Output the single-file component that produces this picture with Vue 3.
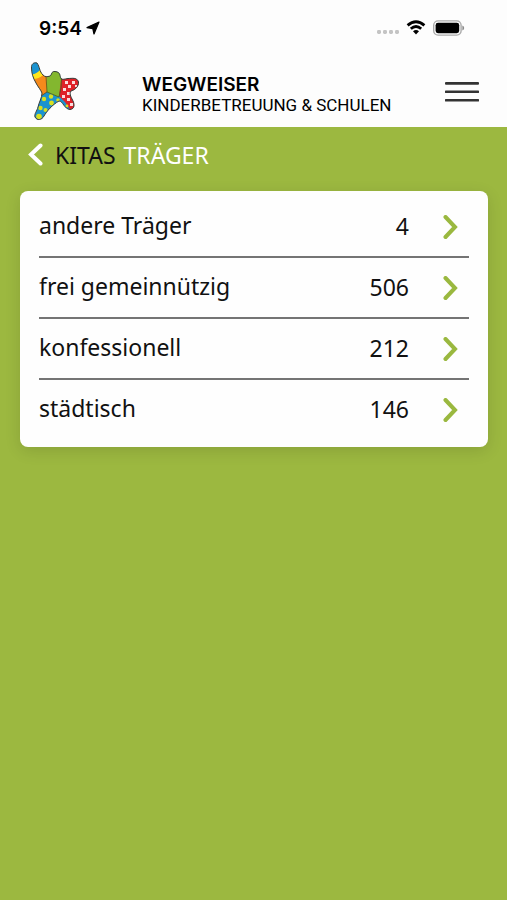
<template>
  <div class="app">
    <header class="header">
      <div class="status-bar">
        <div class="status-time">
          <span>9:54</span>
          <svg width="14" height="14" viewBox="0 0 14 14" aria-hidden="true">
            <path d="M13 1 L8 13 L6.8 7.7 L1 6.6 Z" fill="#000" stroke="#000" stroke-width="1.2" stroke-linejoin="round" />
          </svg>
        </div>
        <div class="status-icons">
          <svg width="22" height="20" viewBox="0 0 22 20" aria-hidden="true">
            <g fill="#c4c4c4">
              <rect v-for="n in 4" :key="n" :x="(n - 1) * 6" y="12" width="4" height="4" rx="1.4" />
            </g>
          </svg>
          <svg width="20" height="16" viewBox="0 0 20 16" aria-hidden="true">
            <g fill="none" stroke="#000" stroke-width="2.8">
              <path d="M1.6 5.4 Q10 -2 18.4 5.4" />
              <path d="M4.8 8.8 Q10 4.2 15.2 8.8" />
            </g>
            <path d="M7 11.2 Q10 8.8 13 11.2 L10 14.4 Z" fill="#000" />
          </svg>
          <svg width="32" height="16" viewBox="0 0 32 16" aria-hidden="true">
            <rect x="0.7" y="0.9" width="27.4" height="14.2" rx="4.4" fill="#fff" stroke="#a9a9a9" stroke-width="1.4" />
            <rect x="2.6" y="2.8" width="23.6" height="10.4" rx="2.4" fill="#000" />
            <path d="M29.4 5.6 Q31.2 6.4 31.2 8 Q31.2 9.6 29.4 10.4 Z" fill="#888" />
          </svg>
        </div>
      </div>

      <div class="brand-bar">
        <svg class="logo" width="50" height="59" viewBox="0 0 50 59" aria-hidden="true">
          <defs>
            <clipPath id="figure">
              <path :d="figure" />
            </clipPath>
          </defs>
          <g clip-path="url(#figure)">
            <rect width="50" height="59" fill="#1b93d0" />
            <path d="M0 12 Q6 13 10 8 L17 14 L8 18 L3 17 Z" fill="#ffe51c" />
            <path d="M3 17 Q9 17 13 13 L17 15 L18 29 L11 34 Z" fill="#f58a1c" />
            <path d="M17 8 L31 8 L32 18 L30 32 L28 35 L17 30 Z" fill="#83b72f" />
            <path d="M31.5 14 L50 14 L50 49 L41 49 L35 40 L29 34 Z" fill="#df2128" />
            <g fill="#d9e021">
              <circle cx="21" cy="34.5" r="2.2" />
              <circle cx="14" cy="37" r="2.2" />
              <circle cx="21.5" cy="41" r="2.4" />
              <circle cx="10.5" cy="46" r="2.2" />
              <circle cx="15.5" cy="48" r="2" />
              <circle cx="9" cy="54.5" r="2.8" />
              <circle cx="28" cy="38" r="1.8" />
              <circle cx="37" cy="44" r="1.4" />
            </g>
            <g fill="#fbdcdc">
              <rect x="35" y="19" width="3" height="3" />
              <rect x="42" y="19" width="3" height="3" />
              <rect x="38" y="23" width="3" height="3" />
              <rect x="45" y="23" width="2" height="2" />
              <rect x="33" y="26" width="3" height="3" />
              <rect x="37" y="30" width="3" height="3" />
              <rect x="32" y="33" width="3" height="3" />
              <rect x="37" y="36" width="3" height="3" />
              <rect x="40" y="41" width="3" height="3" />
            </g>
            <path d="M16 14 L17 30 L29 35 Q32 26 31.5 15" fill="none" stroke="#4a5a1e" stroke-width="0.8" />
            <path d="M17 30 L11 34" stroke="#5a4a1e" stroke-width="0.8" />
          </g>
          <path :d="figure" fill="none" stroke="#3a3f3a" stroke-width="1" />
        </svg>

        <div class="brand">
          <strong>WEGWEISER</strong>
          <span>KINDERBETREUUNG &amp; SCHULEN</span>
        </div>

        <button type="button" class="menu" aria-label="Menü">
          <svg width="34" height="22" viewBox="0 0 34 22" aria-hidden="true">
            <path d="M1 2.4 H33 M1 10.8 H33 M1 19.2 H33" stroke="#333" stroke-width="2.6" stroke-linecap="round" />
          </svg>
        </button>
      </div>
    </header>

    <main class="content">
      <h1 class="title">
        <button type="button" class="back" aria-label="Zurück">
          <svg width="16" height="24" viewBox="0 0 16 24" aria-hidden="true">
            <path d="M12.5 2.5 L3 11.5 L12.5 20.5" fill="none" stroke="#fff" stroke-width="4" stroke-linecap="round" />
          </svg>
        </button>
        <span class="section">KITAS</span>
        <span>TRÄGER</span>
      </h1>

      <ul class="card">
        <li v-for="item in items" :key="item.label">
          <a href="#" class="row" @click.prevent>
            <span class="label">{{ item.label }}</span>
            <span class="count">{{ item.count }}</span>
            <svg width="16" height="24" viewBox="0 0 16 24" aria-hidden="true">
              <path d="M2.500 2 L12 12 L2.500 22" fill="none" stroke="#9ab83f" stroke-width="4" stroke-linecap="round" />
            </svg>
          </a>
        </li>
      </ul>
    </main>
  </div>
</template>

<script setup>
const items = [
  { label: 'andere Träger', count: 4 },
  { label: 'frei gemeinnützig', count: 506 },
  { label: 'konfessionell', count: 212 },
  { label: 'städtisch', count: 146 }
]

// outline of the logo figure, used for the clip and for the stroke
const figure =
  'M7 1 C4 0 1 2 1.5 6 C1.5 11 3 16 6 21 C8 25 11 28 12 31 C12 36 9 40 8 45 C7 49 4 52 5 55 C7 59 12 58 14 54 C17 49 22 43 29 39 C33 39 34 47 40 47.5 C45 47 45 42 42 37 C40 33 39 30 42 28.5 C45 28 49 24 48.5 20 C47 15 42 16.5 38 16.5 C35 17 32 18 31 16.5 C29.5 14 31 10 25 9.5 C21 9 22 13 20 14 C17 15 15 15 13 13 C9 9 10 5 7 1 Z'
</script>

<style>
body {
  margin: 0;
  background: #9cb840;
}
</style>

<style scoped>
.app {
  min-height: 100vh;
  background: #9cb840;
  color: #111;
  font-family: "Noto Sans", "Open Sans", sans-serif;
}
.header {
  background: #fdfdfd;
}
.status-bar {
  display: flex;
  justify-content: space-between;
  align-items: center;
  height: 56px;
  padding: 0 42px 0 39px;
}
.status-time {
  display: flex;
  align-items: center;
  gap: 4px;
  color: #000;
  font-family: Inter, "Liberation Sans", sans-serif;
  font-size: 19px;
  font-weight: 600;
}
.status-icons {
  display: flex;
  align-items: center;
  gap: 7px;
}
.brand-bar {
  display: flex;
  align-items: center;
  height: 71px;
  padding: 0 28px 0 30px;
}
.brand {
  display: flex;
  flex-direction: column;
  flex: 1;
  margin-left: 62px;
  padding-top: 6px;
  color: #000;
  font-family: Roboto, sans-serif;
  font-size: 17px;
  line-height: 21px;
  white-space: nowrap;
}
.brand strong {
  font-family: Inter, sans-serif;
  font-size: 19px;
  font-weight: 600;
}
.menu,
.back {
  display: flex;
  padding: 0;
  border: none;
  background: none;
  cursor: pointer;
}
.content {
  padding: 0 19px 20px 20px;
}
.title {
  display: flex;
  align-items: center;
  gap: 8px;
  height: 56px;
  margin: 0;
  padding: 0 8px 8px;
  color: #fff;
  font-size: 23px;
  font-weight: 400;
}
.back {
  margin-right: 3px;
}
.section {
  color: #111;
}
.card {
  margin: 0;
  padding: 6px 19px;
  list-style: none;
  background: #fefefe;
  border-radius: 8px;
  box-shadow: 0 4px 16px rgba(0, 0, 0, 0.12);
}
.row {
  display: flex;
  align-items: center;
  height: 59px;
  padding-right: 10px;
  border-bottom: 2px solid #747474;
  color: #111;
  font-size: 23px;
  text-decoration: none;
}
li:last-child .row {
  border-bottom-color: transparent;
}
.label {
  flex: 1;
  padding-bottom: 4px;
}
.count {
  margin-right: 34px;
  padding-bottom: 2px;
}
</style>
